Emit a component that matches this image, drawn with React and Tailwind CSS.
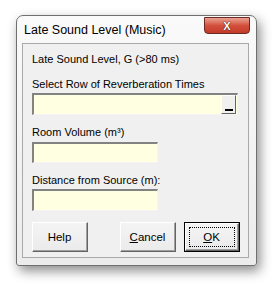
import React from "react";

const sunken =
  "border-t-2 border-l-2 border-b border-r border-t-[#828282] border-l-[#828282] border-b-[#f4f4f4] border-r-[#f4f4f4] bg-[#ffffe1]";

function Btn({ children, def }) {
  return (
    <div
      className={
        "w-[56px] h-[30px] " +
        (def ? "border border-black" : "")
      }
    >
      <div className="w-full h-full border-t border-l border-t-white border-l-white border-b border-r border-b-[#646464] border-r-[#646464] bg-[#f0f0f0]">
        <div className="w-full h-full border-b border-r border-b-[#a0a0a0] border-r-[#a0a0a0] bg-gradient-to-b from-[#f4f4f4] to-[#ebebeb] flex items-center justify-center">
          {def ? (
            <div className="w-[46px] h-[20px] border border-dotted border-black flex items-center justify-center text-[11.5px] leading-[16px] text-black">
              {children}
            </div>
          ) : (
            <span className="text-[11.5px] leading-[16px] text-black">{children}</span>
          )}
        </div>
      </div>
    </div>
  );
}

export default function App() {
  return (
    <div
      className="w-[276px] h-[284px] bg-white pl-[16px] pt-[15px]"
      style={{ fontFamily: '"Liberation Sans", Arial, sans-serif' }}
    >
      <div className="relative w-[241px] h-[251px] rounded-t-[7px] rounded-b-[3px] border border-[#6f6f6f] bg-gradient-to-b from-[#fafafa] to-[#ececec] shadow-[3px_5px_12px_rgba(0,0,0,0.45)] flex flex-col">
        <div className="h-[27px] flex items-start pl-[7px] pt-[6px]">
          <span className="text-[12.5px] leading-[16px] text-black">Late Sound Level (Music)</span>
        </div>
        <div className="absolute top-[1px] right-[6px] w-[46px] h-[17px] rounded-b-[4px] border border-[#6b2a24] bg-gradient-to-b from-[#e8a093] via-[#d3503c] to-[#c23c28] flex items-center justify-center">
          <span
            className="text-white text-[11px] font-bold leading-[14px]"
            style={{ textShadow: "0 0 1px #3a1a15, 0 0 1px #3a1a15" }}
          >
            X
          </span>
        </div>
        <div className="ml-[5px] mr-[7px] h-[215px] border border-[#a9a9a9] bg-[#f0f0f0] pl-[9px] pt-[7px] flex flex-col text-[11px] leading-[16px] text-black">
          <div className="h-[16px]">Late Sound Level, G (&gt;80 ms)</div>
          <div className="h-[16px] mt-[9px]">Select Row of Reverberation Times</div>
          <div className={"mt-[1px] w-[206px] h-[22px] flex justify-end items-start pr-[1px] pt-[0px] " + sunken}>
            <div className="w-[15px] h-[19px] border-t border-l border-t-white border-l-white border-b border-r border-b-[#646464] border-r-[#646464] bg-[#f0f0f0] flex items-end justify-center pb-[2px]">
              <div className="w-[8px] h-[2px] bg-black" />
            </div>
          </div>
          <div className="h-[16px] mt-[9px]">Room Volume (m³)</div>
          <div className={"mt-[2px] w-[126px] h-[21px] " + sunken} />
          <div className="h-[16px] mt-[9px]">Distance from Source (m):</div>
          <div className={"mt-[1px] w-[126px] h-[22px] " + sunken} />
          <div className="mt-[11px] flex">
            <Btn>Help</Btn>
            <div className="ml-[32px]">
              <Btn>
                <span className="underline">C</span>ancel
              </Btn>
            </div>
            <div className="ml-[8px]">
              <Btn def>
                <span className="underline">O</span>K
              </Btn>
            </div>
          </div>
        </div>
      </div>
    </div>
  );
}
